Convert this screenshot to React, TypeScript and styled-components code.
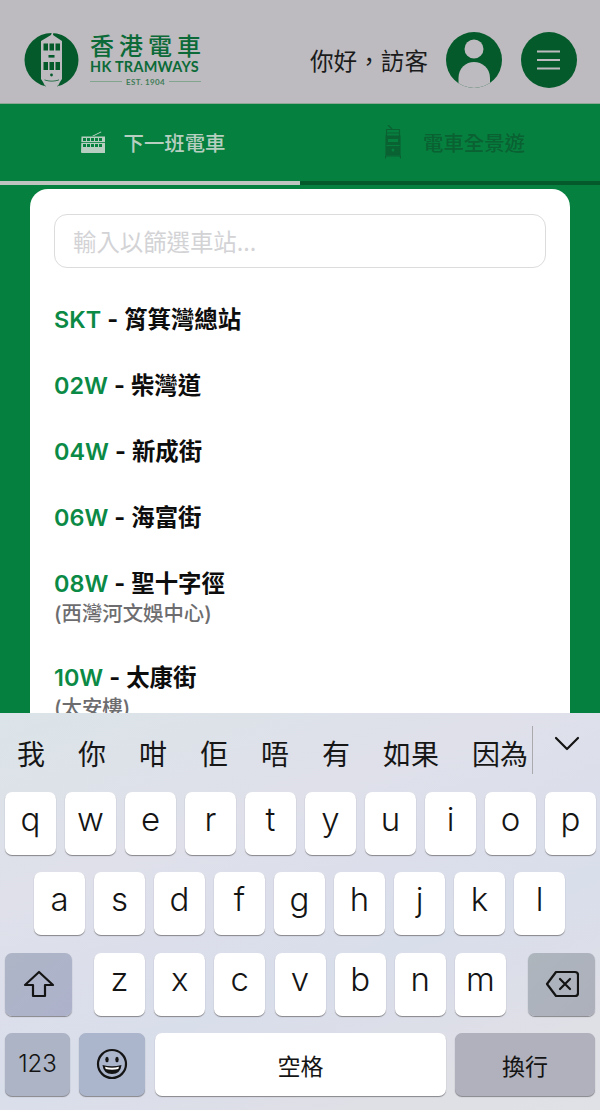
import React from "react";
import styled, { createGlobalStyle } from "styled-components";

const Global = createGlobalStyle`
  html, body { margin: 0; padding: 0; background: #bdbbbf; }
  * { box-sizing: border-box; }
`;
const CJK = `Inter, "Noto Sans CJK TC", sans-serif`;
const DARK = "#045a2b";
const GREEN = "#06803f";
const HEAD = "#bdbbbf";

const Page = styled.div`
  width: 600px; height: 1110px; overflow: hidden; display: flex; flex-direction: column;
  font-family: ${CJK};
`;
const Screen = styled.div`
  height: 713px; flex: none; overflow: hidden; background: ${GREEN};
`;
const Header = styled.header`
  height: 104px; background: ${HEAD}; display: flex; align-items: center;
  padding: 17px 23px 0 24px; border-bottom: 1px solid #8fa896;
`;
const LogoWrap = styled.div`display: flex; align-items: center; gap: 10px;`;
const LogoText = styled.div`display: flex; flex-direction: column; width: 111px; margin-top: -2px;`;
const LogoCn = styled.div`
  font: 500 24px/26px "Noto Sans CJK TC", sans-serif; letter-spacing: 5px; white-space: nowrap; color: #0b6a37;
`;
const LogoEn = styled.div`
  font: 700 14.4px/16px Lato, sans-serif; letter-spacing: .3px; white-space: nowrap; color: #0b6a37; margin-top: 1px;
`;
const LogoEst = styled.div`
  display: flex; align-items: center; gap: 4px; margin-top: 2px; font: 700 8px/10px Lato, sans-serif;
  color: #3f7c58; white-space: nowrap; letter-spacing: .35px;
  &::before, &::after { content: ""; flex: 1; height: 1px; background: #82a590; }
`;
const HeaderRight = styled.div`margin-left: auto; display: flex; align-items: center;`;
const Hello = styled.div`font: 400 23.6px/30px "Noto Sans CJK TC", sans-serif; color: #1b1b1c; margin-right: 18px; white-space: nowrap;`;
const RoundBtn = styled.div`
  width: 56px; height: 56px; border-radius: 50%; background: ${DARK}; flex: none; display: flex;
  align-items: center; justify-content: center; overflow: hidden;
  & + & { margin-left: 19px; }
`;
const Tabs = styled.nav`display: flex; height: 81px; background: ${GREEN};`;
const Tab = styled.div<{ $active?: boolean }>`
  flex: 0 0 300px; display: flex; align-items: center; justify-content: center; padding-bottom: 2px;
  gap: ${(p) => (p.$active ? 18 : 22)}px; padding-left: ${(p) => (p.$active ? 5 : 10)}px;
  border-bottom: 4px solid ${(p) => (p.$active ? "#bfc4c0" : DARK)};
  color: ${(p) => (p.$active ? "#b7cfc0" : "#0a6132")};
  font: 500 20.4px/28px "Noto Sans CJK TC", sans-serif;
`;
const Card = styled.main`
  margin: 4px 30px 0; height: 560px; background: #fff; border-radius: 18px 18px 0 0; padding: 25px 24px 0;
`;
const Search = styled.div`
  height: 54px; border: 1.5px solid #dcdcde; border-radius: 13px; padding: 0 18px; display: flex; align-items: center;
  font: 400 23.4px/30px "Noto Sans CJK TC", sans-serif; color: #d3d3d6;
`;
const List = styled.ul`list-style: none; margin: 35px 0 0; padding: 0;`;
const Item = styled.li`margin-bottom: 33px; min-height: 33px;`;
const Line = styled.div`font: 700 23.4px/33px ${CJK}; color: #0d0d0d; white-space: nowrap; word-spacing: .5px;`;
const Code = styled.span`color: #0b8a46; font-weight: 600;`;
const Sub = styled.div`font: 500 20.4px/28px Inter, "Noto Sans CJK TC", sans-serif; color: #6d6d6f;`;

const Keyboard = styled.section`
  flex: 1; display: flex; flex-direction: column;
  background: linear-gradient(160deg, #dbe4e8 0%, #dfe0ea 30%, #d9deeb 62%, #dfdfe6 85%, #dfe1e6 100%);
`;
const Candidates = styled.div`
  height: 79px; flex: none; display: flex; align-items: center; padding: 0 0 0 17px; gap: 33px; position: relative;
  font: 400 28px/34px "Noto Sans CJK TC", sans-serif; color: #171717;
`;
const Cand = styled.span`white-space: nowrap; margin-top: 1px;`;
const Sep = styled.div`position: absolute; left: 532px; top: 13px; width: 1px; height: 48px; background: #a9a9ae;`;
const Chevron = styled.div`position: absolute; left: 554px; top: 23px; line-height: 0;`;
const Rows = styled.div`display: flex; flex-direction: column; gap: 17.3px;`;
const Row = styled.div<{ $pad?: number; $between?: boolean }>`
  display: flex; height: 63px; gap: 9px; padding: 0 ${(p) => p.$pad ?? 5}px;
  justify-content: ${(p) => (p.$between ? "space-between" : "flex-start")};
`;
const Group = styled.div`display: flex; gap: 9.17px;`;
const Key = styled.div`
  width: 51px; height: 63px; flex: none; background: #fff; border-radius: 7px; box-shadow: 0 1px 1px #85858a;
  display: flex; align-items: center; justify-content: center; padding-bottom: 10px;
  font: 300 33px/40px Inter, sans-serif; color: #141414;
`;
const FnKey = styled.div<{ $w: number; $bg: string }>`
  width: ${(p) => p.$w}px; height: 63px; flex: none; background: ${(p) => p.$bg}; border-radius: 7px; box-shadow: 0 1px 1px #85858a;
  display: flex; align-items: center; justify-content: center; color: #141414;
  font: 400 23px/30px "Noto Sans CJK TC", Inter, sans-serif;
`;
const Num = styled.span`font: 300 24px/30px Inter, sans-serif;`;
const Space = styled(FnKey)`margin-left: 1px; padding-top: 2px;`;
const Enter = styled(FnKey)`padding-top: 2px;`;

const Logo = () => (
  <svg width="56" height="56" viewBox="0 0 56 56" style={{ flex: "none" }}>
    <circle cx="27.5" cy="28" r="27" fill="#045a2b" />
    <path d="M22 56h11V50H22z" fill={HEAD} />
    <path d="M17 9 L27 3 L28 0 L29.5 0 L29 3 L38 9 V47 L36 50 L34 54 Q27 50 21 54 L19 50 L17 47Z" fill={HEAD} />
    <g fill="#045a2b">
      <rect x="19.5" y="11.5" width="4.5" height="7" /><rect x="25.5" y="11.5" width="4.5" height="7" /><rect x="31.5" y="11.5" width="4.5" height="7" />
      <rect x="24.5" y="23" width="6" height="2.6" />
      <rect x="19.5" y="30" width="4.5" height="8" /><rect x="25.5" y="30" width="4.5" height="8" /><rect x="31.5" y="30" width="4.5" height="8" />
      <circle cx="27.5" cy="43" r="1.4" />
      <path d="M20.5 47.5 Q27.5 50 35 47.5 L35 48.2 Q27.5 51 20.5 48.2Z" />
    </g>
  </svg>
);
const UserIcon = () => (
  <svg width="56" height="56" viewBox="0 0 56 56">
    <circle cx="28" cy="17" r="9.5" fill={HEAD} />
    <path d="M12.5 56 V46 C12.5 36 20 30 28 30 C36 30 44 36 44 46 V56Z" fill={HEAD} />
  </svg>
);
const MenuIcon = () => (
  <svg width="26" height="22" viewBox="0 0 26 22" fill={HEAD}>
    <rect x="1" y="1.5" width="23" height="2" /><rect x="1" y="10" width="23" height="2" /><rect x="1" y="18.5" width="23" height="2" />
  </svg>
);
const TramSide = () => (
  <svg width="26" height="24" viewBox="0 0 26 24" fill="#b7cfc0">
    <path d="M12 6 L21 1.5 L21.4 2.2 L14 6Z" />
    <path d="M1.5 6.5 H25 V23 H2 Q1 23 1 22Z" />
    <g fill="#06803f">
      <rect x="3" y="8" width="3" height="3" /><rect x="7" y="8" width="3" height="3" /><rect x="11" y="8" width="3" height="3" /><rect x="15" y="8" width="3" height="3" /><rect x="19" y="8" width="3" height="3" />
      <rect x="1" y="12" width="24" height=".8" />
      <rect x="3" y="14" width="3" height="3" /><rect x="7" y="14" width="3" height="3" /><rect x="11" y="14" width="3" height="3" /><rect x="15" y="14" width="3" height="3" /><rect x="19" y="14" width="3" height="3" />
    </g>
  </svg>
);
const TramFront = () => (
  <svg width="16" height="34" viewBox="0 0 16 34" fill="none" stroke="#0a6132" strokeWidth="1.2">
    <path d="M3 0 L7 4 M1 4.5 H15 M1.5 4.5 V11 M14.5 4.5 V11 M1 8 H15" />
    <path d="M1 11 H15 V30 H1Z" fill="#0a6132" />
    <path d="M1 31 L0 33.5 M15 31 L16 33.5 M0 31 H16" />
    <rect x="3" y="14" width="10" height="3" fill="#06803f" stroke="none" />
    <circle cx="8" cy="25" r="1.5" fill="#06803f" stroke="none" />
    <rect x="1.5" y="20" width="13" height="1" fill="#06803f" stroke="none" />
  </svg>
);
const ShiftIcon = () => (
  <svg width="32" height="28" viewBox="0 0 32 28" fill="none" stroke="#141414" strokeWidth="2.2" strokeLinejoin="round">
    <path d="M16 2 L30 15 H22 V26 H10 V15 H2Z" />
  </svg>
);
const BackIcon = () => (
  <svg width="34" height="28" viewBox="0 0 34 28" fill="none" stroke="#141414" strokeWidth="2.2" strokeLinejoin="round" strokeLinecap="round">
    <path d="M11 2 H30 Q33 2 33 5 V23 Q33 26 30 26 H11 L2 14Z" />
    <path d="M15 9 L25 19 M25 9 L15 19" />
  </svg>
);
const SmileIcon = () => (
  <svg width="32" height="32" viewBox="0 0 32 32" fill="none" stroke="#141414" strokeWidth="2.2">
    <circle cx="16" cy="16" r="14" />
    <ellipse cx="11" cy="11.5" rx="1.7" ry="2.7" fill="#141414" stroke="none" />
    <ellipse cx="21" cy="11.5" rx="1.7" ry="2.7" fill="#141414" stroke="none" />
    <path d="M6.5 17 Q16 19.5 25.5 17 Q24.5 26 16 26 Q7.5 26 6.5 17Z" fill="#141414" stroke="none" />
    <path d="M9 18.8 Q16 20.5 23 18.8 L22.3 21 Q16 22.5 9.7 21Z" fill="#fff" stroke="none" />
  </svg>
);

const stations: [string, string, string?][] = [
  ["SKT", "筲箕灣總站"],
  ["02W", "柴灣道"],
  ["04W", "新成街"],
  ["06W", "海富街"],
  ["08W", "聖十字徑", "(西灣河文娛中心)"],
  ["10W", "太康街", "(太安樓)"],
];
const cands = ["我", "你", "咁", "佢", "唔", "有", "如果", "因為"];

export default function App() {
  return (
    <Page lang="zh-Hant">
      <Global />
      <Screen>
        <Header>
          <LogoWrap>
            <Logo />
            <LogoText>
              <LogoCn>香港電車</LogoCn>
              <LogoEn>HK TRAMWAYS</LogoEn>
              <LogoEst>EST. 1904</LogoEst>
            </LogoText>
          </LogoWrap>
          <HeaderRight>
            <Hello>你好，訪客</Hello>
            <RoundBtn><UserIcon /></RoundBtn>
            <RoundBtn><MenuIcon /></RoundBtn>
          </HeaderRight>
        </Header>
        <Tabs>
          <Tab $active><TramSide />下一班電車</Tab>
          <Tab><TramFront />電車全景遊</Tab>
        </Tabs>
        <Card>
          <Search>輸入以篩選車站...</Search>
          <List>
            {stations.map(([c, n, s]) => (
              <Item key={c}>
                <Line><Code>{c}</Code> - {n}</Line>
                {s && <Sub>{s}</Sub>}
              </Item>
            ))}
          </List>
        </Card>
      </Screen>
      <Keyboard>
        <Candidates>
          {cands.map((c) => <Cand key={c}>{c}</Cand>)}
          <Sep />
          <Chevron>
            <svg width="26" height="16" viewBox="0 0 26 16" fill="none" stroke="#141414" strokeWidth="2.2" strokeLinecap="round" strokeLinejoin="round">
              <path d="M2 2 L13 13 L24 2" />
            </svg>
          </Chevron>
        </Candidates>
        <Rows>
          <Row>{"qwertyuiop".split("").map((k) => <Key key={k}>{k}</Key>)}</Row>
          <Row $pad={34}>{"asdfghjkl".split("").map((k) => <Key key={k}>{k}</Key>)}</Row>
          <Row $between>
            <FnKey $w={67} $bg="linear-gradient(135deg,#aeb5c6,#adb2cb)"><ShiftIcon /></FnKey>
            <Group>{"zxcvbnm".split("").map((k) => <Key key={k}>{k}</Key>)}</Group>
            <FnKey $w={67} $bg="linear-gradient(135deg,#adb5bd,#adb0bb)"><BackIcon /></FnKey>
          </Row>
          <Row>
            <FnKey $w={65} $bg="#adb4c5"><Num>123</Num></FnKey>
            <FnKey $w={66} $bg="#abb5cb"><SmileIcon /></FnKey>
            <Space $w={291} $bg="#fff">空格</Space>
            <Enter $w={140} $bg="#b0b1bc">換行</Enter>
          </Row>
        </Rows>
      </Keyboard>
    </Page>
  );
}
